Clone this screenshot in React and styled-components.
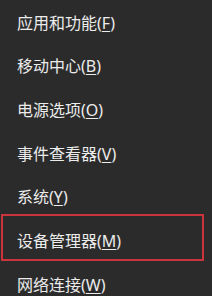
import React from "react";
import styled, { createGlobalStyle } from "styled-components";

const GlobalStyle = createGlobalStyle`
  html, body {
    margin: 0;
    padding: 0;
    background: #2b2b2b;
  }
`;

const items = [
  { label: "应用和功能", key: "F" },
  { label: "移动中心", key: "B" },
  { label: "电源选项", key: "O" },
  { label: "事件查看器", key: "V" },
  { label: "系统", key: "Y" },
  { label: "设备管理器", key: "M", marked: true },
  { label: "网络连接", key: "W" },
];

export default function App() {
  return (
    <>
      <GlobalStyle />
      <Menu>
        {items.map((item) => (
          <Row key={item.key} $marked={item.marked}>
            <Label>
              {item.label}(<Key>{item.key}</Key>)
            </Label>
          </Row>
        ))}
      </Menu>
    </>
  );
}

const Menu = styled.div`
  width: 212px;
  height: 296px;
  overflow: hidden;
  background: #2b2b2b;
  display: flex;
  flex-direction: column;
`;

const Row = styled.div`
  position: relative;
  flex: 0 0 43.67px;
  display: flex;
  align-items: center;
  padding-left: 17px;

  &::after {
    content: "";
    display: ${(p) => (p.$marked ? "block" : "none")};
    position: absolute;
    top: -4px;
    bottom: 1px;
    left: 1px;
    right: 8px;
    border: 2px solid #c9343d;
  }
`;

const Label = styled.span`
  font-family: "Noto Sans", "Noto Sans CJK SC", sans-serif;
  font-size: 16px;
  color: #ececec;
  white-space: nowrap;
`;

const Key = styled.span`
  text-decoration: underline;
  text-decoration-thickness: 1px;
  text-underline-offset: 2px;
`;
